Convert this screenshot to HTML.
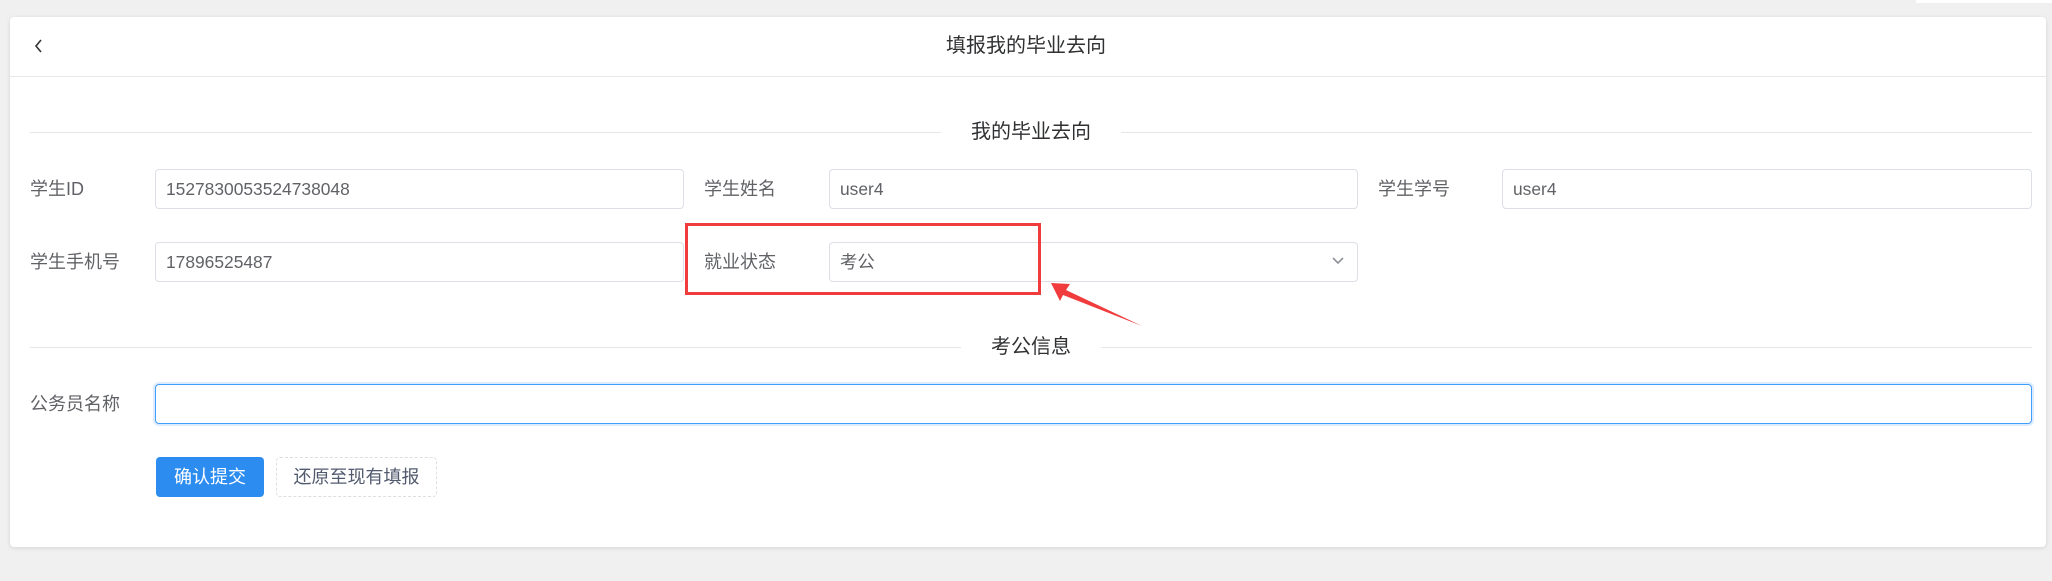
<!DOCTYPE html>
<html><head><meta charset="utf-8"><style>
*{box-sizing:border-box;margin:0;padding:0}
body{width:2052px;height:581px;background:#f0f0f0;position:relative;overflow:hidden;font-family:"Liberation Sans","Noto Sans CJK SC",sans-serif;}
.top{position:absolute;left:1916px;top:0;width:136px;height:3px;background:#fff}
.card{position:absolute;left:10px;top:17px;width:2036px;height:530px;background:#fff;border-radius:4px;box-shadow:0 1px 4px rgba(0,0,0,.12)}
.hdr{position:absolute;left:10px;top:17px;width:2036px;height:60px;border-bottom:1px solid #e8e8e8}
.title{position:absolute;left:0;width:2052px;top:32px;text-align:center;font-size:20px;color:#303133;line-height:28px}
.back{position:absolute;left:32px;top:34px;width:14px;height:24px}
.div{position:absolute;left:30px;width:2002px;height:1px;background:#e6e6e6}
.dt{position:absolute;left:0;width:2062px;text-align:center;font-size:20px;color:#303133;line-height:24px}
.dt span{background:#fff;padding:0 30px}
.lbl{position:absolute;font-size:18px;color:#606266;line-height:24px}
.inp{position:absolute;height:40px;border:1px solid #dcdfe6;border-radius:4px;font-size:17.4px;color:#606266;padding-left:10px;line-height:38px}
.btn{position:absolute;top:457px;height:40px;border-radius:4px;font-size:18px;line-height:40px;text-align:center}
</style></head><body>
<div class="top"></div>
<div class="card"></div>
<div class="hdr"></div>
<svg class="back" viewBox="0 0 14 24"><path d="M9 6 L4 12 L9 18" fill="none" stroke="#333" stroke-width="1.6"/></svg>
<div class="title">填报我的毕业去向</div>

<div class="div" style="top:132px"></div>
<div class="dt" style="top:120px"><span>我的毕业去向</span></div>

<div class="lbl" style="left:30px;top:177px">学生ID</div>
<div class="inp" style="left:155px;top:169px;width:529px">1527830053524738048</div>
<div class="lbl" style="left:704px;top:177px">学生姓名</div>
<div class="inp" style="left:829px;top:169px;width:529px">user4</div>
<div class="lbl" style="left:1378px;top:177px">学生学号</div>
<div class="inp" style="left:1502px;top:169px;width:530px">user4</div>

<div class="lbl" style="left:30px;top:250px">学生手机号</div>
<div class="inp" style="left:155px;top:242px;width:529px">17896525487</div>
<div class="lbl" style="left:704px;top:250px">就业状态</div>
<div class="inp" style="left:829px;top:242px;width:529px">考公</div>
<svg style="position:absolute;left:1331px;top:255px" width="14" height="12" viewBox="0 0 14 12"><path d="M2 3 L7 8 L12 3" fill="none" stroke="#909399" stroke-width="1.6"/></svg>

<div style="position:absolute;left:685px;top:223px;width:356px;height:72px;border:3px solid #f03c3c"></div>
<svg style="position:absolute;left:1040px;top:270px" width="110" height="65" viewBox="1040 270 110 65">
<path d="M1051 283 L1070 284 L1066 290 L1142 326 L1063 295 L1060 301 Z" fill="#f03c3c"/>
</svg>

<div class="div" style="top:347px"></div>
<div class="dt" style="top:335px"><span>考公信息</span></div>

<div class="lbl" style="left:30px;top:392px">公务员名称</div>
<div class="inp" style="left:155px;top:384px;width:1877px;border-color:#409eff;box-shadow:0 0 0 2px #dcebfd"></div>

<div class="btn" style="left:156px;width:108px;background:#2d8cf0;color:#fff">确认提交</div>
<div class="btn" style="left:276px;width:161px;border:1px dashed #dcdee2;color:#515a6e;line-height:38px">还原至现有填报</div>
</body></html>
